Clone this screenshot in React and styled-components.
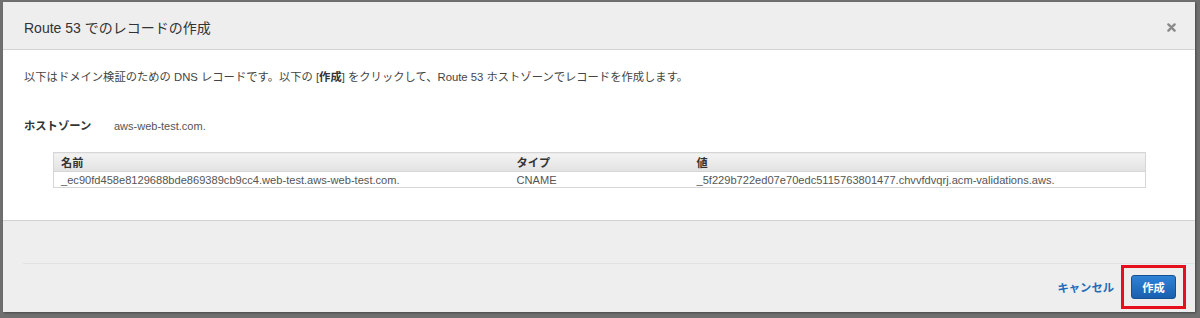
import React from 'react';
import styled, { createGlobalStyle } from 'styled-components';

const Global = createGlobalStyle`
  *, *::before, *::after { box-sizing: border-box; }
  html, body { margin: 0; padding: 0; }
  body {
    background: #6f6f6f;
    font-family: "Liberation Sans", Arial, "Noto Sans CJK JP", sans-serif;
    font-size: 11.2px;
    color: #444;
  }
`;

const Backdrop = styled.div`
  height: 318px;
  padding: 2px 5px 6px 3px;
  display: flex;
`;

const Dialog = styled.div`
  flex: 1;
  display: flex;
  flex-direction: column;
  background: #fff;
  box-shadow: 1px 1px 2px rgba(0, 0, 0, 0.35);
`;

const Header = styled.div`
  height: 48px;
  background: #eeeeee;
  border-bottom: 1px solid #d3d3d3;
  display: flex;
  align-items: center;
  justify-content: space-between;
  padding: 3px 19px 0 21px;
`;

const Title = styled.h1`
  margin: 0;
  font-size: 14px;
  font-weight: normal;
  color: #333;
`;

const Close = styled.button`
  border: none;
  background: none;
  padding: 0;
  width: 9px;
  height: 9px;
  display: flex;
  cursor: pointer;
`;

const Body = styled.div`
  height: 171px;
  padding: 19px 21px 0;
  border-bottom: 1px solid #d3d3d3;
`;

const Intro = styled.p`
  margin: 0;
  font-size: 11.3px;
  line-height: 16px;
  color: #444;
  b { color: #333; }
`;

const Zone = styled.div`
  display: flex;
  align-items: center;
  margin-top: 33px;
  line-height: 16px;
`;

const ZoneLabel = styled.span`
  width: 90px;
  font-size: 11.3px;
  font-weight: bold;
  color: #333;
`;

const ZoneValue = styled.span`
  font-size: 11px;
  color: #555;
`;

const Table = styled.table`
  margin: 18px 0 0 29px;
  width: 1093px;
  border-collapse: collapse;
  border: 1px solid #d6d6d6;
  table-layout: fixed;
`;

const Th = styled.th`
  text-align: left;
  font-weight: bold;
  color: #333;
  height: 19px;
  padding: 0 7px;
  background: linear-gradient(#f3f3f3, #e2e2e2);
  border-bottom: 1px solid #d6d6d6;
  width: ${p => p.$w ? `${p.$w}px` : 'auto'};
`;

const Td = styled.td`
  color: #555;
  font-size: 11.1px;
  height: 16px;
  padding: 0 7px;
  white-space: nowrap;
`;

const Footer = styled.div`
  flex: 1;
  background: #eeeeee;
  padding: 42px 0 0 20px;
  display: flex;
  flex-direction: column;
`;

const Actions = styled.div`
  flex: 1;
  border-top: 1px solid #e2e2e2;
  display: flex;
  align-items: center;
  justify-content: flex-end;
  gap: 7px;
  padding: 0 9px 2px 0;
`;

const Cancel = styled.a`
  color: #1f6bb8;
  font-size: 11.3px;
  font-weight: bold;
  text-decoration: none;
  cursor: pointer;
`;

const Highlight = styled.div`
  border: 3px solid #e5101c;
  padding: 7px;
  display: flex;
`;

const Primary = styled.button`
  width: 45px;
  height: 24px;
  border: 1px solid #15508f;
  border-radius: 3px;
  background: linear-gradient(#2f82d6, #1a5fae);
  color: #fff;
  font-family: inherit;
  font-size: 11.3px;
  font-weight: bold;
  padding: 0;
  cursor: pointer;
`;

const records = [
  {
    name: '_ec90fd458e8129688bde869389cb9cc4.web-test.aws-web-test.com.',
    type: 'CNAME',
    value: '_5f229b722ed07e70edc5115763801477.chvvfdvqrj.acm-validations.aws.',
  },
];

export default function App() {
  return (
    <>
      <Global />
      <Backdrop>
        <Dialog>
          <Header>
            <Title>Route 53 でのレコードの作成</Title>
            <Close aria-label="閉じる">
              <svg width="9" height="9" viewBox="0 0 9 9">
                <path d="M1.4 1.4 L7.6 7.6 M7.6 1.4 L1.4 7.6" stroke="#8a8a8a" strokeWidth="2.4" strokeLinecap="round" />
              </svg>
            </Close>
          </Header>
          <Body>
            <Intro>
              以下はドメイン検証のための DNS レコードです。以下の [<b>作成</b>] をクリックして、Route 53 ホストゾーンでレコードを作成します。
            </Intro>
            <Zone>
              <ZoneLabel>ホストゾーン</ZoneLabel>
              <ZoneValue>aws-web-test.com.</ZoneValue>
            </Zone>
            <Table>
              <thead>
                <tr>
                  <Th $w={456}>名前</Th>
                  <Th $w={180}>タイプ</Th>
                  <Th>値</Th>
                </tr>
              </thead>
              <tbody>
                {records.map(r => (
                  <tr key={r.name}>
                    <Td>{r.name}</Td>
                    <Td>{r.type}</Td>
                    <Td>{r.value}</Td>
                  </tr>
                ))}
              </tbody>
            </Table>
          </Body>
          <Footer>
            <Actions>
              <Cancel>キャンセル</Cancel>
              <Highlight>
                <Primary>作成</Primary>
              </Highlight>
            </Actions>
          </Footer>
        </Dialog>
      </Backdrop>
    </>
  );
}
